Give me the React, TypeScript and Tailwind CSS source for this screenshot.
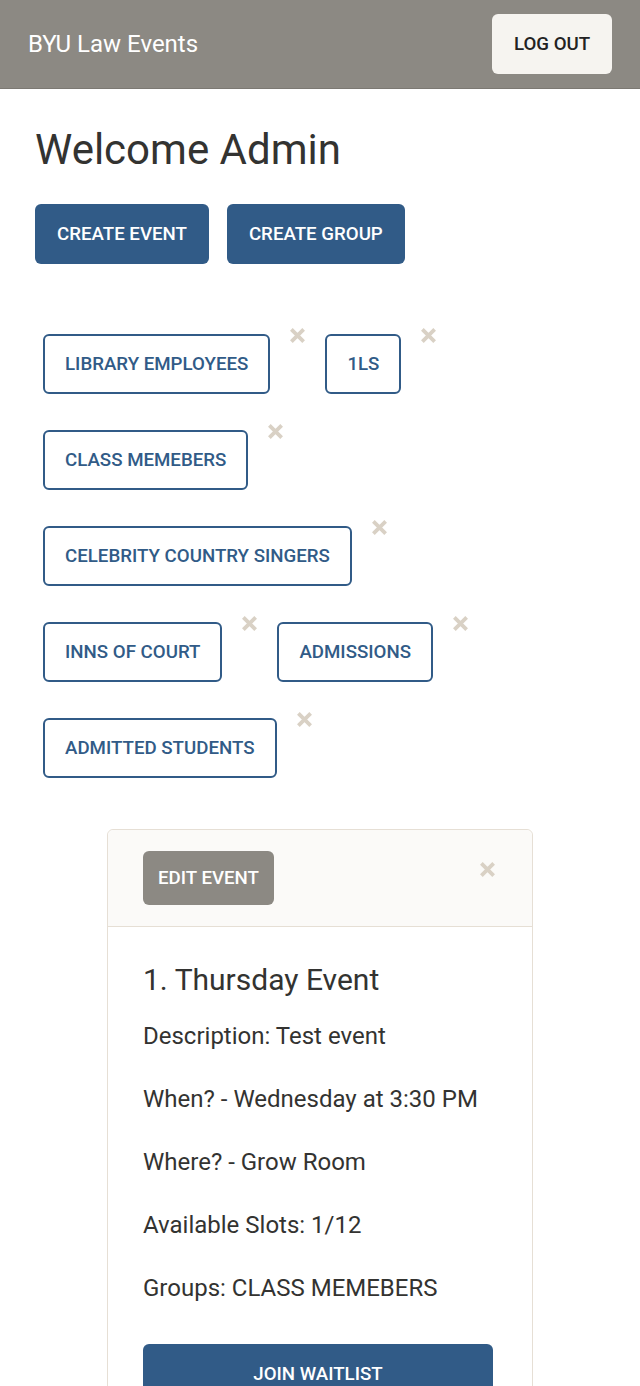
import React from "react"

const groups = [
  "LIBRARY EMPLOYEES",
  "1LS",
  "CLASS MEMEBERS",
  "CELEBRITY COUNTRY SINGERS",
  "INNS OF COURT",
  "ADMISSIONS",
  "ADMITTED STUDENTS",
]

function CloseX({ className = "" }: { className?: string }) {
  return (
    <svg viewBox="0 0 18 18" className={className} fill="none" stroke="currentColor" strokeWidth="4">
      <path d="M2.5 2.5 L15.5 15.5 M15.5 2.5 L2.5 15.5" />
    </svg>
  )
}

export default function App() {
  return (
    <div className="min-h-screen bg-white font-['Roboto',sans-serif] text-[#333331]">
      <header className="flex h-[89px] items-center justify-between border-b border-[#7c7973] bg-[#8c8983] pl-[28px] pr-[28px]">
        <span className="text-[24px] text-white">BYU Law Events</span>
        <button className="h-[60px] w-[120px] rounded-md bg-[#f6f4f0] text-[18.7px] font-medium text-[#222]">
          LOG OUT
        </button>
      </header>

      <main className="px-[35px]">
        <h1 className="mt-[36px] text-[42px] leading-[1.2]">Welcome Admin</h1>

        <div className="mt-[29px] flex gap-[18px]">
          <button className="h-[60px] rounded-md bg-[#315b87] px-[22px] text-[18.7px] font-medium text-white">
            CREATE EVENT
          </button>
          <button className="h-[60px] rounded-md bg-[#315b87] px-[22px] text-[18.7px] font-medium text-white">
            CREATE GROUP
          </button>
        </div>

        <div className="mt-[70px] flex flex-wrap gap-y-[36px]">
          {groups.map((g) => (
            <div key={g} className="mr-[11px] flex items-start">
              <button className="ml-[8px] h-[60px] rounded-md border-2 border-[#315b87] px-[20px] text-[18.7px] font-medium text-[#315b87]">
                {g}
              </button>
              <CloseX className="-mt-[7px] ml-[19px] h-[17px] w-[17px] text-[#d9d1c5]" />
            </div>
          ))}
        </div>

        <div className="mx-auto mt-[51px] w-[426px] rounded-md border border-[#e6dfd5]">
          <div className="flex items-start justify-between rounded-t-md border-b border-[#e6dfd5] bg-[#fbfaf8] py-[21px] pl-[35px] pr-[36px]">
            <button className="h-[54px] rounded-md bg-[#8c8983] px-[15px] text-[18.7px] font-medium text-white">
              EDIT EVENT
            </button>
            <CloseX className="mt-[10px] h-[17px] w-[17px] text-[#d9d1c5]" />
          </div>
          <div className="pl-[35px] pr-[39px] pt-[35px]">
            <h2 className="text-[30px] leading-[1.2]">1. Thursday Event</h2>
            <div className="mt-[22px] flex flex-col gap-[31px] text-[24px] leading-[32px]">
              <p>Description: Test event</p>
              <p>When? - Wednesday at 3:30 PM</p>
              <p>Where? - Grow Room</p>
              <p>Available Slots: 1/12</p>
              <p>Groups: CLASS MEMEBERS</p>
            </div>
            <button className="mb-[30px] mt-[40px] h-[60px] w-full rounded-md bg-[#315b87] text-[18.7px] font-medium text-white">
              JOIN WAITLIST
            </button>
          </div>
        </div>
      </main>
    </div>
  )
}
